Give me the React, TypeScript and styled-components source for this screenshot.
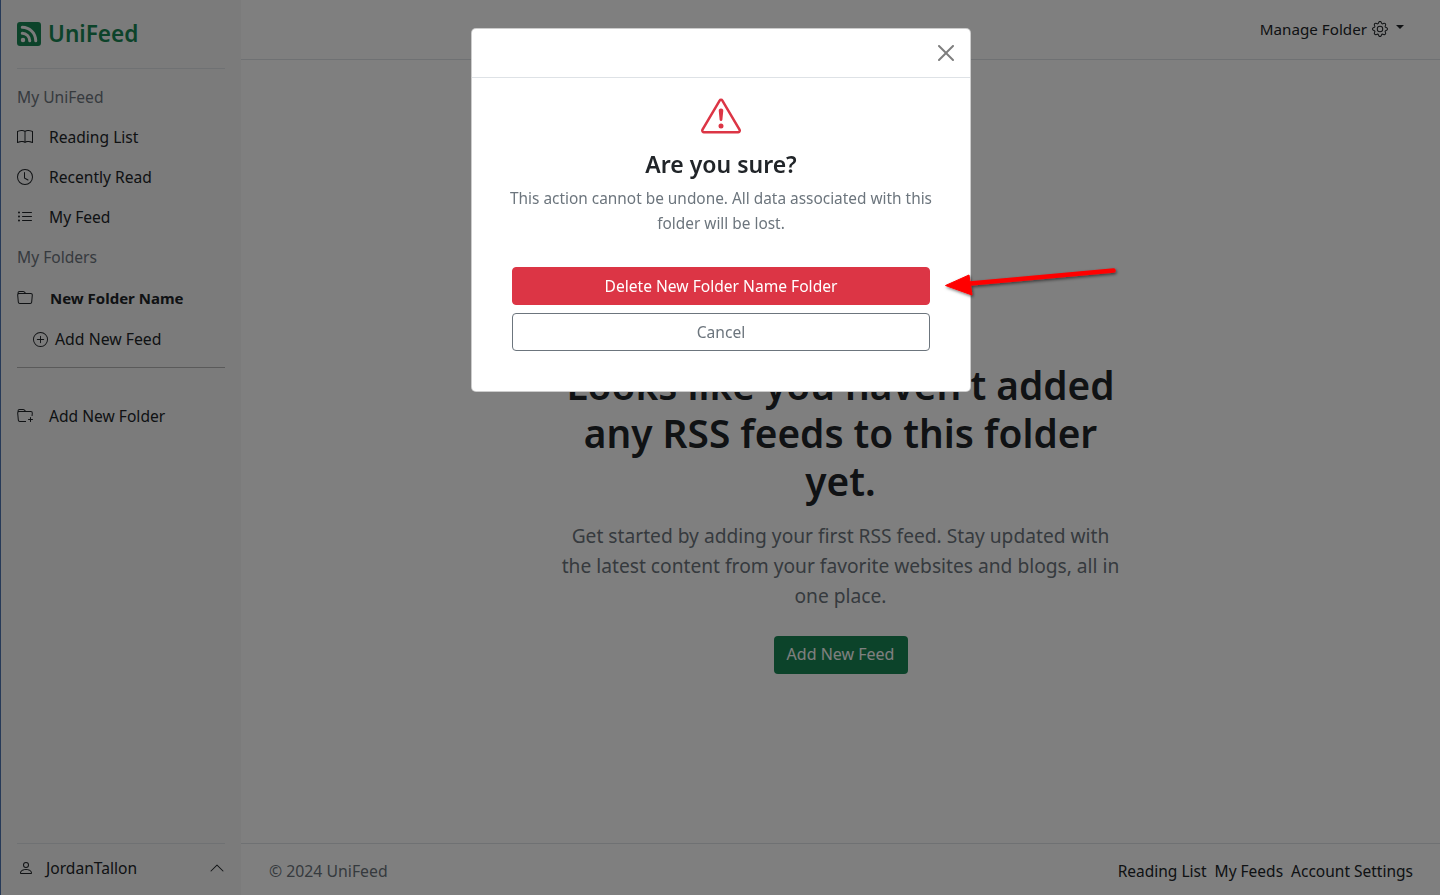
import * as React from 'react';
import styled, { createGlobalStyle } from 'styled-components';
import {
  BsBook,
  BsChevronUp,
  BsClock,
  BsExclamationTriangle,
  BsFolder,
  BsFolderPlus,
  BsGear,
  BsListUl,
  BsPerson,
  BsPlusCircle,
  BsRssFill,
} from 'react-icons/bs';

const Global = createGlobalStyle`
  html, body {
    margin: 0;
    height: 100%;
  }
  body {
    font-family: "Noto Sans", "Open Sans", sans-serif;
    font-size: 15.6px;
    line-height: 24px;
    color: #212529;
    background: #fff;
  }
  * {
    box-sizing: border-box;
  }
`;

const Page = styled.div`
  display: flex;
  width: 1440px;
  height: 895px;
  overflow: hidden;
`;

const Sidebar = styled.aside`
  width: 241px;
  flex: none;
  display: flex;
  flex-direction: column;
  padding: 0 16px 0 16px;
  background: #f6f6f6;
  border-left: 1px solid #4f74b0;
`;

const Brand = styled.div`
  height: 69px;
  display: flex;
  align-items: center;
  gap: 7px;
  border-bottom: 1px solid #dee2e6;
  color: #198754;
  font-size: 22.6px;
  font-weight: 600;
`;

const SectionLabel = styled.div<{ $first?: boolean }>`
  height: 40px;
  margin-top: ${(p) => (p.$first ? '8px' : '0')};
  display: flex;
  align-items: center;
  color: #6c757d;
`;

const NavItem = styled.div<{ $indent?: boolean; $bold?: boolean }>`
  height: ${(p) => (p.$bold ? '42px' : '40px')};
  display: flex;
  align-items: center;
  gap: ${(p) => (p.$indent ? '7px' : p.$bold ? '17px' : '16px')};
  padding-left: ${(p) => (p.$indent ? '16px' : '0')};
  font-size: ${(p) => (p.$indent ? '15.8px' : p.$bold ? '15px' : 'inherit')};
  font-weight: ${(p) => (p.$bold ? 700 : 400)};
  svg {
    flex: none;
  }
`;

const Divider = styled.hr`
  margin: 8px 0 28px;
  border: 0;
  border-top: 1px solid #b5b5b5;
  width: 100%;
`;

const UserRow = styled.div`
  margin-top: auto;
  height: 52px;
  padding: 0 0 4px 1px;
  display: flex;
  align-items: center;
  gap: 12px;
  border-top: 1px solid #dee2e6;
  svg:last-child {
    margin-left: auto;
  }
`;

const Main = styled.main`
  flex: 1;
  display: flex;
  flex-direction: column;
  min-width: 0;
`;

const TopBar = styled.header`
  height: 60px;
  flex: none;
  display: flex;
  align-items: center;
  justify-content: flex-end;
  padding: 0 36px 2px 0;
  border-bottom: 1px solid #dee2e6;
  font-size: 15.2px;
  gap: 5px;
`;

const Caret = styled.span`
  width: 0;
  height: 0;
  margin-left: 3px;
  margin-top: -3px;
  border-top: 4.8px solid #212529;
  border-left: 4.8px solid transparent;
  border-right: 4.8px solid transparent;
`;

const Content = styled.section`
  flex: 1;
  display: flex;
  flex-direction: column;
  align-items: center;
  padding-top: 301px;
`;

const Headline = styled.h1`
  width: 560px;
  margin: 0 0 16px;
  text-align: center;
  font-size: 38.8px;
  line-height: 48px;
  font-weight: 600;
`;

const Lead = styled.p`
  width: 560px;
  margin: 0 0 25px;
  text-align: center;
  font-size: 19.2px;
  line-height: 30px;
  color: #6c757d;
`;

const GreenButton = styled.button`
  height: 38px;
  width: 134px;
  padding: 0 0 2px;
  border: 0;
  border-radius: 4px;
  background: #198754;
  color: #fff;
  font: inherit;
  font-size: 16px;
`;

const Footer = styled.footer`
  height: 52px;
  flex: none;
  display: flex;
  align-items: center;
  justify-content: space-between;
  padding: 2px 27px 0 28px;
  border-top: 1px solid #dee2e6;
  color: #6c757d;
`;

const Copyright = styled.span`
  font-size: 15.8px;
`;

const FooterLinks = styled.nav`
  display: flex;
  gap: 8px;
  font-size: 15.5px;
  color: #212529;
`;

const Backdrop = styled.div`
  position: fixed;
  inset: 0;
  background: rgba(0, 0, 0, 0.5);
`;

const Dialog = styled.div`
  position: fixed;
  top: 28px;
  left: 471px;
  width: 500px;
  height: 364px;
  background: #fff;
  border: 1px solid rgba(0, 0, 0, 0.2);
  border-radius: 5px;
  display: flex;
  flex-direction: column;
`;

const DialogHeader = styled.div`
  height: 49px;
  flex: none;
  display: flex;
  align-items: center;
  justify-content: flex-end;
  padding-right: 16px;
  border-bottom: 1px solid #dee2e6;
`;

const CloseIcon = styled.svg`
  opacity: 0.5;
`;

const DialogBody = styled.div`
  padding: 18px 40px 0;
  display: flex;
  flex-direction: column;
  align-items: center;
  text-align: center;
`;

const WarningIcon = styled(BsExclamationTriangle)`
  color: #dc3545;
`;

const DialogTitle = styled.h5`
  margin: 14px 0 7px;
  font-size: 23px;
  line-height: 29px;
  font-weight: 600;
`;

const DialogText = styled.p`
  margin: 0 -10px 31px;
  font-size: 15.4px;
  line-height: 25px;
  color: #6c757d;
`;

const DialogButton = styled.button<{ $danger?: boolean }>`
  width: 100%;
  height: 38px;
  margin-bottom: 8px;
  padding: 0 0 1px;
  border-radius: 4px;
  font: inherit;
  border: 1px solid ${(p) => (p.$danger ? '#dc3545' : '#6c757d')};
  background: ${(p) => (p.$danger ? '#dc3545' : '#fff')};
  color: ${(p) => (p.$danger ? '#fff' : '#6c757d')};
`;

const Arrow = styled.svg`
  position: fixed;
  top: 260px;
  left: 940px;
  overflow: visible;
`;

export default function App() {
  return (
    <>
      <Global />
      <Page>
        <Sidebar>
          <Brand>
            <BsRssFill size={24} />
            UniFeed
          </Brand>
          <SectionLabel $first>My UniFeed</SectionLabel>
          <NavItem><BsBook size={16} />Reading List</NavItem>
          <NavItem><BsClock size={16} />Recently Read</NavItem>
          <NavItem><BsListUl size={16} />My Feed</NavItem>
          <SectionLabel>My Folders</SectionLabel>
          <NavItem $bold><BsFolder size={16} />New Folder Name</NavItem>
          <NavItem $indent><BsPlusCircle size={15} />Add New Feed</NavItem>
          <Divider />
          <NavItem><BsFolderPlus size={16} />Add New Folder</NavItem>
          <UserRow>
            <BsPerson size={16} />
            JordanTallon
            <BsChevronUp size={16} />
          </UserRow>
        </Sidebar>
        <Main>
          <TopBar>
            Manage Folder
            <BsGear size={16} />
            <Caret />
          </TopBar>
          <Content>
            <Headline>Looks like you haven't added any RSS feeds to this folder yet.</Headline>
            <Lead>Get started by adding your first RSS feed. Stay updated with the latest content from your favorite websites and blogs, all in one place.</Lead>
            <GreenButton>Add New Feed</GreenButton>
          </Content>
          <Footer>
            <Copyright>© 2024 UniFeed</Copyright>
            <FooterLinks>
              <span>Reading List</span>
              <span>My Feeds</span>
              <span>Account Settings</span>
            </FooterLinks>
          </Footer>
        </Main>
      </Page>
      <Backdrop />
      <Dialog>
        <DialogHeader>
          <CloseIcon width="16" height="16" viewBox="0 0 16 16" fill="#000">
            <path d="M.293.293a1 1 0 0 1 1.414 0L8 6.586 14.293.293a1 1 0 1 1 1.414 1.414L9.414 8l6.293 6.293a1 1 0 0 1-1.414 1.414L8 9.414l-6.293 6.293a1 1 0 0 1-1.414-1.414L6.586 8 .293 1.707a1 1 0 0 1 0-1.414z" />
          </CloseIcon>
        </DialogHeader>
        <DialogBody>
          <WarningIcon size={40} />
          <DialogTitle>Are you sure?</DialogTitle>
          <DialogText>This action cannot be undone. All data associated with this folder will be lost.</DialogText>
          <DialogButton $danger>Delete New Folder Name Folder</DialogButton>
          <DialogButton>Cancel</DialogButton>
        </DialogBody>
      </Dialog>
      <Arrow width="180" height="40" viewBox="0 0 180 40">
        <defs>
          <filter id="arrowShadow" x="-10%" y="-50%" width="120%" height="200%">
            <feDropShadow dx="1" dy="1.5" stdDeviation="1.5" floodColor="#000" floodOpacity="0.55" />
          </filter>
        </defs>
        <g filter="url(#arrowShadow)" fill="#f00">
          <path d="M173.5 10.5 L30 23.5" stroke="#f00" strokeWidth="4.5" strokeLinecap="round" />
          <path d="M5.5 25.5 L29 15 L32 35 Z" stroke="#f00" strokeWidth="1" strokeLinejoin="round" />
        </g>
      </Arrow>
    </>
  );
}
